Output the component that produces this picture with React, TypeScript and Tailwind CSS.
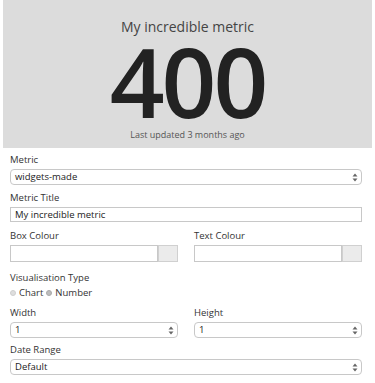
import React from "react";

const font = { fontFamily: '"Open Sans", "Noto Sans", sans-serif' };

function Label({ children }: { children: React.ReactNode }) {
  return <div className="text-[9.5px] leading-[14px] text-[#333] mb-[2px]">{children}</div>;
}

function Select({ value }: { value: string }) {
  return (
    <div className="h-[16px] border border-[#c8c8c8] rounded-[4px] bg-white flex items-center justify-between pl-[4px] pr-[3px]">
      <span className="text-[9.5px] leading-none text-[#222]">{value}</span>
      <svg width="6" height="9" viewBox="0 0 6 9">
        <path d="M3 0.5 L5.5 3.5 H0.5 Z" fill="#666" />
        <path d="M3 8.5 L5.5 5.5 H0.5 Z" fill="#666" />
      </svg>
    </div>
  );
}

function ColourField() {
  return (
    <div className="flex h-[17px]">
      <div className="flex-1 border border-[#c8c8c8] bg-white" />
      <div className="w-[20px] border border-[#d0d0d0] bg-[#ebebeb]" />
    </div>
  );
}

function Radio({ label, checked }: { label: string; checked?: boolean }) {
  return (
    <span className="flex items-center gap-[3px] mr-[3px]">
      <span
        className={
          checked
            ? "w-[6px] h-[6px] rounded-full bg-[#bdbdbd] border border-[#aaa]"
            : "w-[6px] h-[6px] rounded-full bg-[#dedede] border border-[#cfcfcf]"
        }
      />
      <span className="text-[9.5px] leading-[12px] text-[#333]">{label}</span>
    </span>
  );
}

export default function App() {
  return (
    <div style={font} className="w-[375px] h-[383px] bg-white">
      <div className="mx-[3px] h-[148px] bg-[#dcdcdc] flex flex-col items-center">
        <div className="mt-[17px] text-[14px] leading-[20px] text-[#444]">My incredible metric</div>
        <div className="text-[96px] leading-[84px] mt-[2px] font-semibold text-[#222] tracking-[-3px]">400</div>
        <div className="mt-[6px] text-[9px] leading-[12px] text-[#555]">Last updated 3 months ago</div>
      </div>
      <div className="px-[10px] pr-[13px] pt-[5px]">
        <Label>Metric</Label>
        <Select value="widgets-made" />
        <div className="mt-[6px]" />
        <Label>Metric Title</Label>
        <div className="h-[15px] border border-[#c8c8c8] bg-white flex items-center pl-[4px]">
          <span className="text-[9.5px] leading-none text-[#222]">My incredible metric</span>
        </div>
        <div className="mt-[7px] grid grid-cols-2 gap-x-[16px]">
          <div>
            <Label>Box Colour</Label>
            <ColourField />
          </div>
          <div>
            <Label>Text Colour</Label>
            <ColourField />
          </div>
        </div>
        <div className="mt-[9px]">
          <Label>Visualisation Type</Label>
          <div className="flex items-center">
            <Radio label="Chart" />
            <Radio label="Number" checked />
          </div>
        </div>
        <div className="mt-[7px] grid grid-cols-2 gap-x-[16px]">
          <div>
            <Label>Width</Label>
            <Select value="1" />
          </div>
          <div>
            <Label>Height</Label>
            <Select value="1" />
          </div>
        </div>
        <div className="mt-[5px]">
          <Label>Date Range</Label>
          <Select value="Default" />
        </div>
      </div>
    </div>
  );
}
